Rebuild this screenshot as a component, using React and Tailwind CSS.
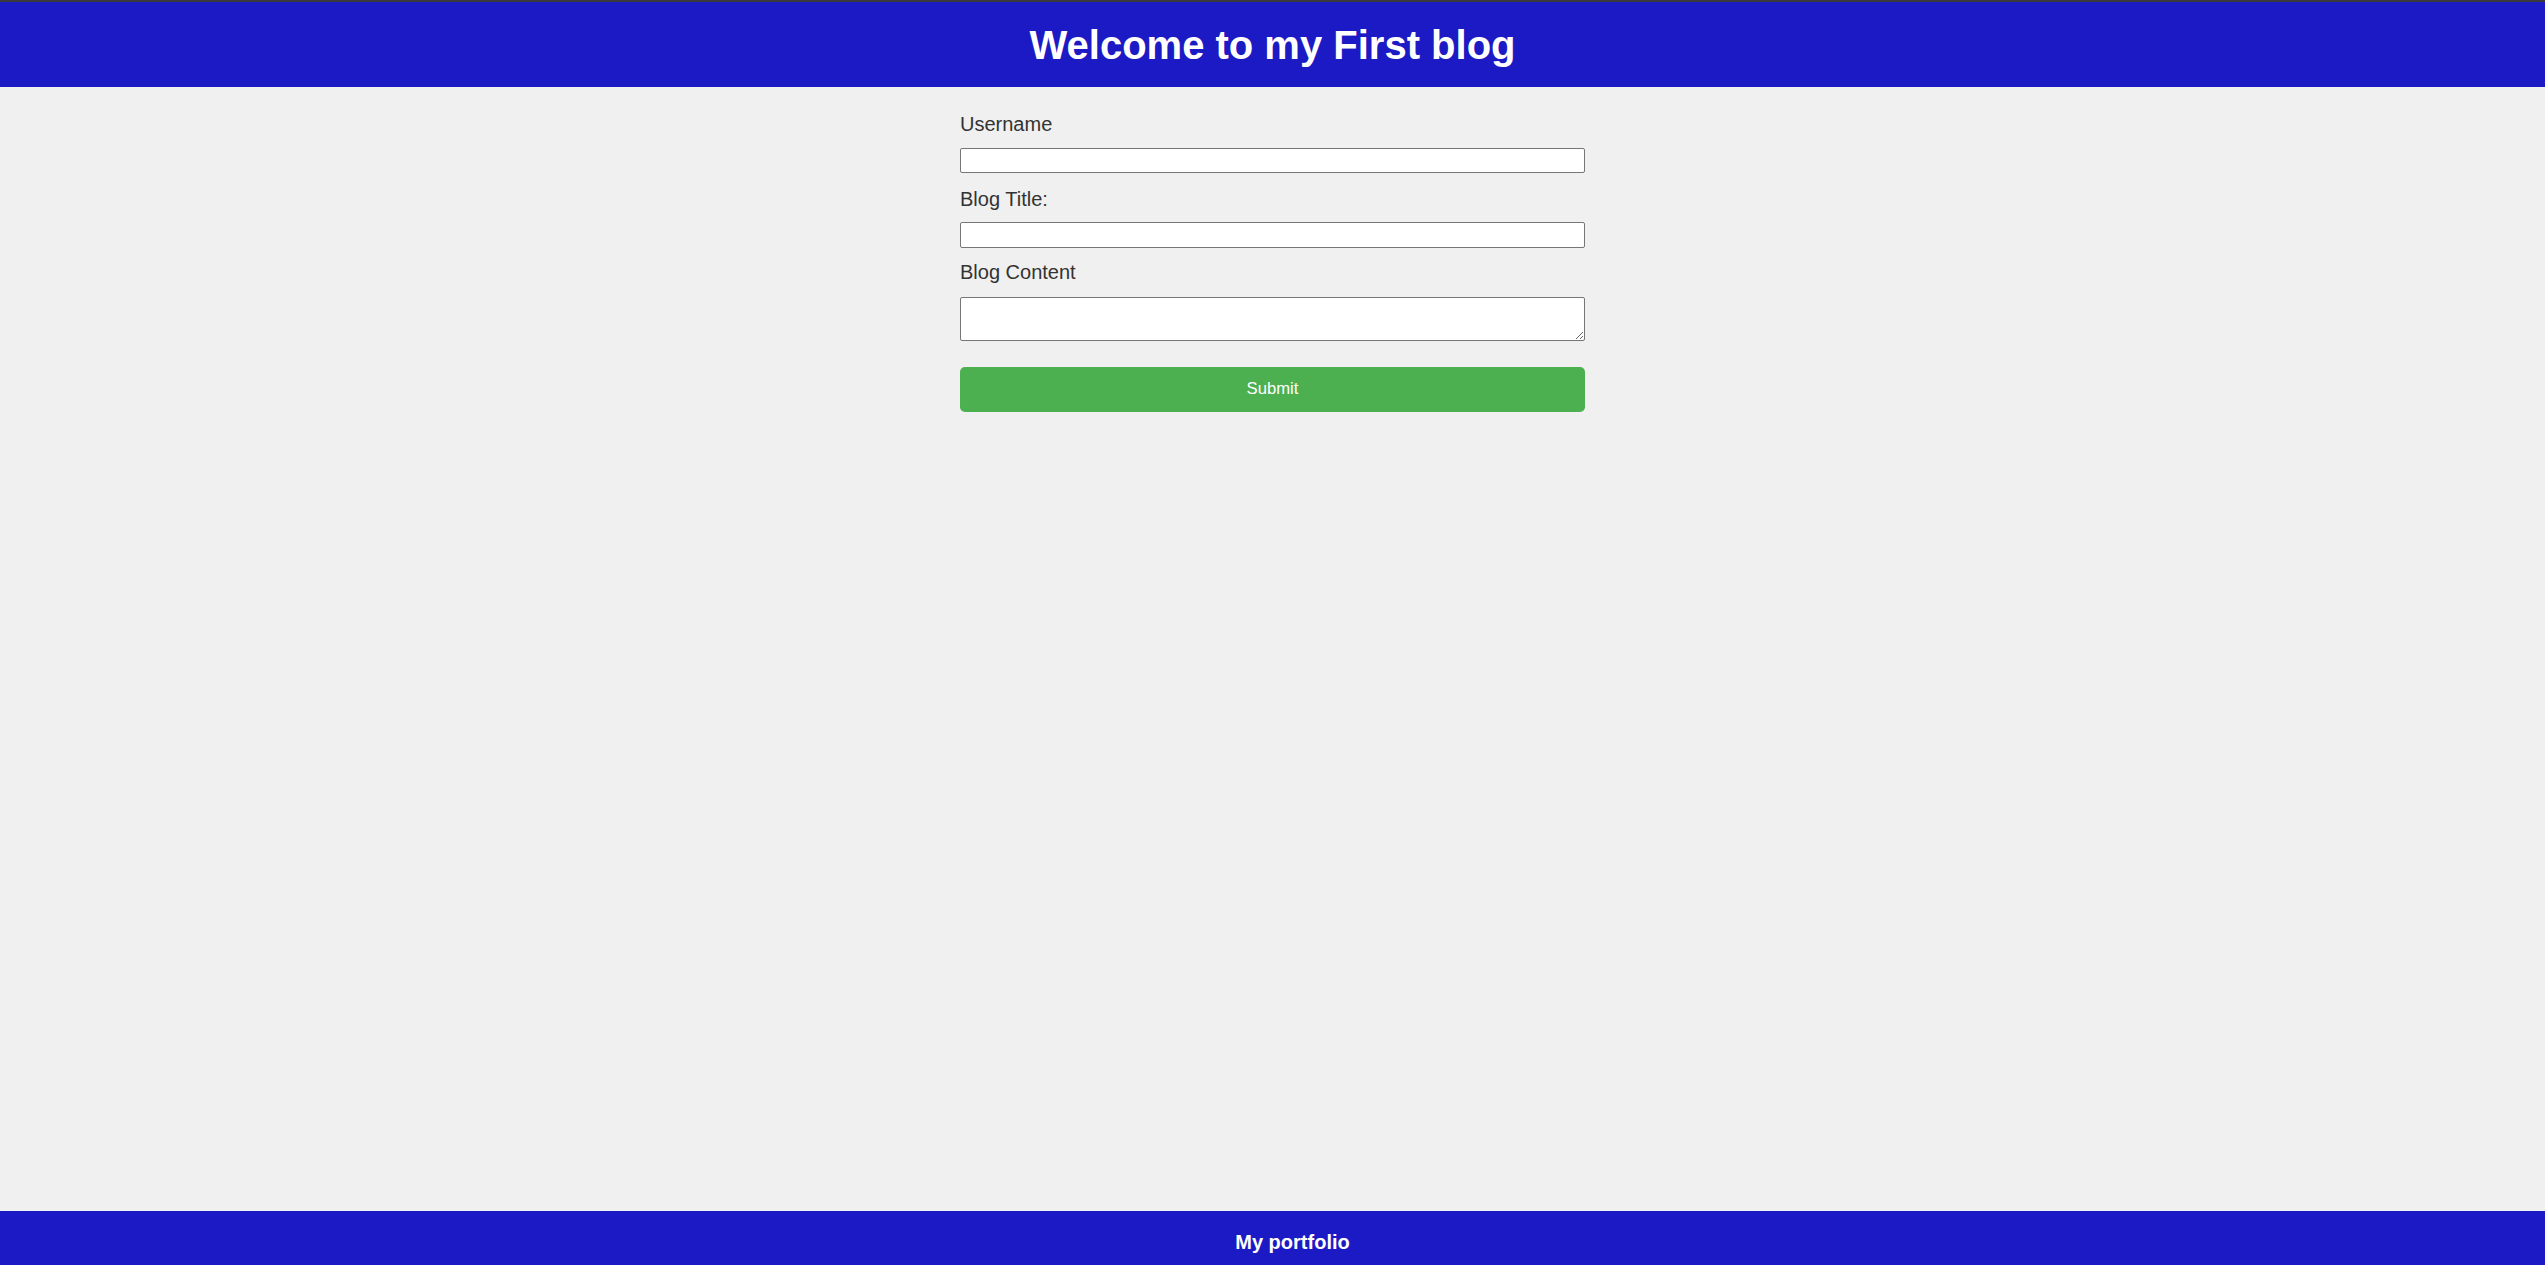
export default function App() {
  return (
    <div className="min-h-screen flex flex-col bg-[#f0f0f0] font-['Liberation_Sans',Arial,sans-serif] border-t-2 border-[#3a3a3a]">
      <header className="h-[85px] bg-[#1c1ac4] flex items-center justify-center">
        <h1 className="text-[40px] font-bold text-white leading-[46px] mt-[1px]">Welcome to my First blog</h1>
      </header>
      <main className="flex-1 flex justify-center">
        <form className="w-[625px] pt-[26px] flex flex-col" onSubmit={(e) => e.preventDefault()}>
          <label className="block text-[20px] leading-[23px] text-[#333333] mb-[12px]">Username</label>
          <input type="text" className="block w-full h-[25px] bg-white border border-[#767676] rounded-[2px] mb-[15px] outline-none" />
          <label className="block text-[20px] leading-[23px] text-[#333333] mb-[11px]">Blog Title:</label>
          <input type="text" className="block w-full h-[26px] bg-white border border-[#767676] rounded-[2px] mb-[13px] outline-none" />
          <label className="block text-[20px] leading-[23px] text-[#333333] mb-[13px]">Blog Content</label>
          <textarea className="block w-full h-[44px] bg-white border border-[#767676] rounded-[2px] mb-[26px] outline-none resize" />
          <button type="submit" className="w-full h-[45px] bg-[#4caf50] text-white text-[16.67px] rounded-[5px] flex items-center justify-center pb-[3px]">Submit</button>
        </form>
      </main>
      <footer className="h-[54px] bg-[#1c1ac4] flex justify-center pt-[20px] pl-[40px]">
        <span className="text-[20px] leading-[23px] font-bold text-white">My portfolio</span>
      </footer>
    </div>
  );
}
